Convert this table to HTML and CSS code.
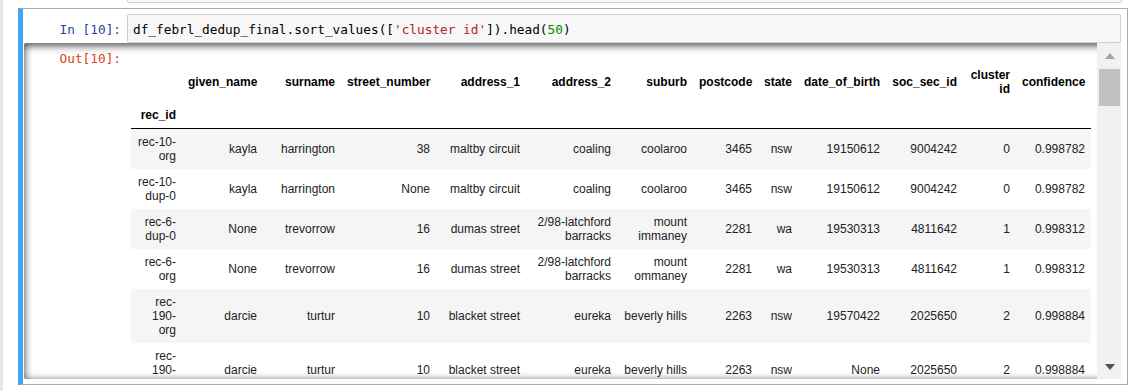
FILE: index.html
```html
<!DOCTYPE html>
<html>
<head>
<meta charset="utf-8">
<title>Notebook</title>
<link rel="stylesheet" href="styles.css">
</head>
<body>
<div class="notebook">
  <div class="cell prev">
    <div class="prompt"></div>
    <div class="input-stub"></div>
  </div>
  <div class="cell selected">
    <div class="input">
      <div class="prompt in">In&nbsp;[10]:</div>
      <div class="input-area"><pre class="code">df_febrl_dedup_final.sort_values([<span class="str">'cluster id'</span>]).head(<span class="num">50</span>)</pre></div>
    </div>
    <div class="output-scroll">
      <div class="output-view">
        <div class="prompt out">Out[10]:</div>
        <div class="output-subarea">
          <table class="dataframe">
            <colgroup>
              <col class="c1"><col class="c2"><col class="c3"><col class="c4"><col class="c5"><col class="c6"><col class="c7"><col class="c8"><col class="c9"><col class="c10"><col class="c11"><col class="c12"><col class="c13">
            </colgroup>
            <thead>
              <tr>
                <th></th><th>given_name</th><th>surname</th><th>street_number</th><th>address_1</th><th>address_2</th><th>suburb</th><th>postcode</th><th>state</th><th>date_of_birth</th><th>soc_sec_id</th><th>cluster id</th><th>confidence</th>
              </tr>
              <tr>
                <th>rec_id</th><th></th><th></th><th></th><th></th><th></th><th></th><th></th><th></th><th></th><th></th><th></th><th></th>
              </tr>
            </thead>
            <tbody>
              <tr>
                <th>rec-10-org</th><td>kayla</td><td>harrington</td><td>38</td><td>maltby circuit</td><td>coaling</td><td>coolaroo</td><td>3465</td><td>nsw</td><td>19150612</td><td>9004242</td><td>0</td><td>0.998782</td>
              </tr>
              <tr>
                <th>rec-10-dup-0</th><td>kayla</td><td>harrington</td><td>None</td><td>maltby circuit</td><td>coaling</td><td>coolaroo</td><td>3465</td><td>nsw</td><td>19150612</td><td>9004242</td><td>0</td><td>0.998782</td>
              </tr>
              <tr>
                <th>rec-6-dup-0</th><td>None</td><td>trevorrow</td><td>16</td><td>dumas street</td><td>2/98-latchford barracks</td><td>mount immaney</td><td>2281</td><td>wa</td><td>19530313</td><td>4811642</td><td>1</td><td>0.998312</td>
              </tr>
              <tr>
                <th>rec-6-org</th><td>None</td><td>trevorrow</td><td>16</td><td>dumas street</td><td>2/98-latchford barracks</td><td>mount ommaney</td><td>2281</td><td>wa</td><td>19530313</td><td>4811642</td><td>1</td><td>0.998312</td>
              </tr>
              <tr>
                <th>rec-190-org</th><td>darcie</td><td>turtur</td><td>10</td><td>blacket street</td><td>eureka</td><td>beverly hills</td><td>2263</td><td>nsw</td><td>19570422</td><td>2025650</td><td>2</td><td>0.998884</td>
              </tr>
              <tr>
                <th>rec-190-dup-0</th><td>darcie</td><td>turtur</td><td>10</td><td>blacket street</td><td>eureka</td><td>beverly hills</td><td>2263</td><td>nsw</td><td>None</td><td>2025650</td><td>2</td><td>0.998884</td>
              </tr>
            </tbody>
          </table>
        </div>
      </div>
      <div class="scrollbar">
        <div class="sb-button up"><span class="tri-up"></span></div>
        <div class="sb-thumb"></div>
        <div class="sb-track"></div>
        <div class="sb-button down"><span class="tri-down"></span></div>
      </div>
    </div>
  </div>
</div>
</body>
</html>
```
FILE: styles.css
```css
html, body {
  margin: 0;
  padding: 0;
  background: #ffffff;
}

.notebook {
  border-left: 3px solid #e8e8e8;
  padding-left: 15px;
  min-height: 391px;
  box-sizing: border-box;
  width: 1140px;
}

.cell {
  display: flex;
  flex-direction: column;
  width: 1110px;
  box-sizing: border-box;
}

.cell.prev {
  flex-direction: row;
  padding: 0 6px 5px 6px;
}

.input-stub {
  flex: 1;
  height: 3px;
  box-sizing: border-box;
  background: #f7f7f7;
  border: 1px solid #cfcfcf;
  border-top: none;
  border-radius: 0 0 2px 2px;
}

.cell.selected {
  border: 1px solid #ababab;
  border-left: 5px solid #42a5f5;
  padding: 5px 6px 5px 1px;
}

.prompt {
  width: 103px;
  flex: none;
  box-sizing: border-box;
  padding-right: 6px;
  text-align: right;
  font-family: "DejaVu Sans Mono", "Liberation Mono", monospace;
  font-size: 12.75px;
}

.input {
  display: flex;
  height: 29px;
}

.prompt.in {
  color: #303f9f;
  line-height: 31px;
}

.input-area {
  flex: 1;
  box-sizing: border-box;
  height: 29px;
  background: #f7f7f7;
  border: 1px solid #cfcfcf;
  border-radius: 2px;
  padding: 0 5px;
}

.code {
  margin: 0;
  font-family: "DejaVu Sans Mono", "Liberation Mono", monospace;
  font-size: 12.75px;
  line-height: 29px;
  color: #000000;
}

.code .str {
  color: #ba2121;
}

.code .num {
  color: #008800;
}

.output-scroll {
  display: flex;
  height: 336px;
  box-shadow: inset 0 2px 8px rgba(0, 0, 0, 0.8);
  border-radius: 2px;
}

.output-view {
  flex: 1;
  display: flex;
  overflow: hidden;
}

.prompt.out {
  color: #d84315;
  padding-top: 7px;
  line-height: 17px;
}

.output-subarea {
  padding-top: 19px;
  padding-left: 4px;
}

.dataframe {
  width: 960px;
  table-layout: fixed;
  border-collapse: collapse;
  border-spacing: 0;
  font-family: "Liberation Sans", Arial, sans-serif;
  font-size: 12px;
  color: #000000;
}

.dataframe th,
.dataframe td {
  padding: 6px;
  text-align: right;
  vertical-align: middle;
  line-height: normal;
}

.dataframe thead {
  border-bottom: 1px solid #000000;
}

.dataframe thead th {
  font-weight: bold;
}

.dataframe tbody th {
  font-weight: normal;
}

.dataframe tbody td,
.dataframe tbody th {
  color: #222222;
}

.dataframe tbody tr:nth-child(odd) {
  background: #f5f5f5;
}

.c1 { width: 51px; }
.c2 { width: 81px; }
.c3 { width: 78px; }
.c4 { width: 95px; }
.c5 { width: 90px; }
.c6 { width: 91px; }
.c7 { width: 76px; }
.c8 { width: 65px; }
.c9 { width: 40px; }
.c10 { width: 88px; }
.c11 { width: 77px; }
.c12 { width: 53px; }
.c13 { width: 75px; }

.scrollbar {
  width: 24px;
  flex: none;
  background: #f1f1f1;
  display: flex;
  flex-direction: column;
}

.sb-button {
  display: flex;
  align-items: center;
  justify-content: center;
  padding-left: 1px;
}

.sb-button.up {
  height: 26px;
}

.sb-button.down {
  height: 24px;
}

.tri-up {
  width: 0;
  height: 0;
  border-left: 5px solid transparent;
  border-right: 5px solid transparent;
  border-bottom: 6px solid #a3a3a3;
}

.tri-down {
  width: 0;
  height: 0;
  border-left: 5px solid transparent;
  border-right: 5px solid transparent;
  border-top: 6px solid #505050;
}

.sb-thumb {
  height: 37px;
  margin: 0 1px 0 2px;
  background: #c1c1c1;
}

.sb-track {
  flex: 1;
}
```
